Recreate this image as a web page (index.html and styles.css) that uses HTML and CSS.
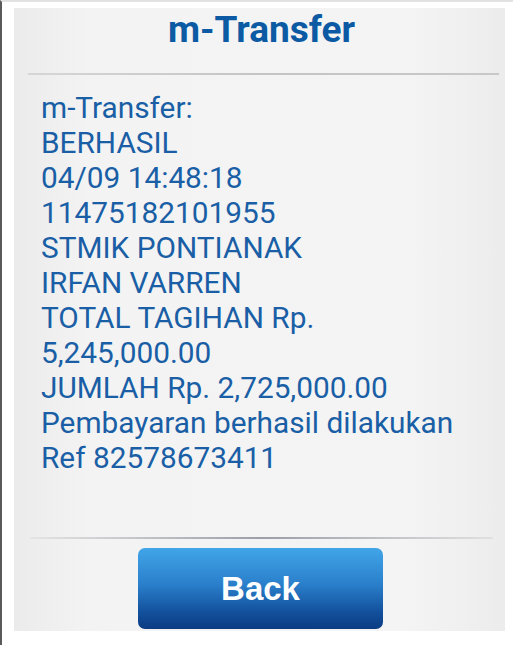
FILE: index.html
```html
<!DOCTYPE html>
<html>
<head>
<meta charset="utf-8">
<link rel="stylesheet" href="styles.css">
</head>
<body>
<div class="frame">
  <div class="panel">
    <div class="header"><h1 class="title">m-Transfer</h1></div>
    <div class="divider"></div>
    <div class="content">
      <div class="line">m-Transfer:</div>
      <div class="line">BERHASIL</div>
      <div class="line">04/09 14:48:18</div>
      <div class="line">11475182101955</div>
      <div class="line">STMIK PONTIANAK</div>
      <div class="line">IRFAN VARREN</div>
      <div class="line">TOTAL TAGIHAN Rp.</div>
      <div class="line">5,245,000.00</div>
      <div class="line">JUMLAH Rp. 2,725,000.00</div>
      <div class="line">Pembayaran berhasil dilakukan</div>
      <div class="line">Ref 82578673411</div>
    </div>
    <div class="divider bottom"></div>
    <div class="footer"><button class="back">Back</button></div>
  </div>
</div>
</body>
</html>
```
FILE: styles.css
```css
html, body {
  margin: 0;
  padding: 0;
  background: #ffffff;
  height: 100%;
}
body {
  font-family: Roboto, "Liberation Sans", sans-serif;
}
.frame {
  height: 645px;
  box-sizing: border-box;
  border-left: 2px solid #5a5a5a;
  border-top: 2px solid #e2e2e2;
  padding: 6px 8px 14px 12px;
}
.panel {
  height: 623px;
  background: linear-gradient(to right, #ebebeb 0%, #f3f3f3 15%, #f4f4f4 80%, #ececec 100%);
  display: flex;
  flex-direction: column;
}
.header {
  height: 65px;
  display: flex;
  align-items: center;
  justify-content: center;
}
.title {
  margin: 0;
  font-size: 37px;
  font-weight: bold;
  color: #0b5aa3;
  padding-bottom: 21px;
  padding-left: 4px;
  line-height: 44px;
}
.divider {
  height: 2px;
  margin: 0 6px 0 14px;
  background: linear-gradient(to right, #d6d6d6, #c4c4c4 50%, #c8c8c8 100%);
}
.content {
  flex: 1;
  padding: 15px 0 0 27px;
}
.line {
  font-size: 29.8px;
  line-height: 35px;
  color: #1a5fa6;
  white-space: nowrap;
}
.divider.bottom {
  margin: 0 12px 0 16px;
  height: 2px;
  background: linear-gradient(to right, #e4e4e4, #9a9fa8 50%, #e0e0e0);
}
.footer {
  height: 92px;
  display: flex;
  justify-content: center;
  padding-top: 9px;
  box-sizing: border-box;
}
.back {
  width: 245px;
  height: 81px;
  border: none;
  border-radius: 7px;
  background: linear-gradient(to bottom, #41a5e8 0%, #2a7fcb 45%, #124f9b 80%, #0b3c82 100%);
  color: #ffffff;
  font-family: "Liberation Sans", Arial, sans-serif;
  font-weight: bold;
  font-size: 33px;
  margin-left: 2px;
}
```
